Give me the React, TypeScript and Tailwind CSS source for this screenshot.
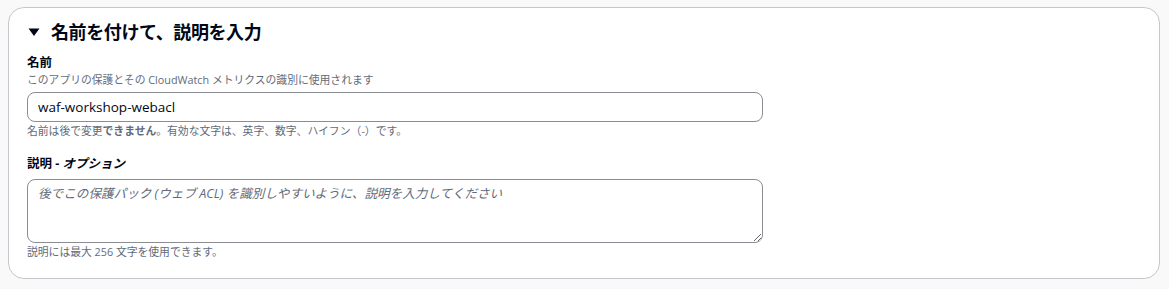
import React from "react";

const font = '"Open Sans", "Noto Sans", "Noto Sans CJK JP", sans-serif';

export default function App() {
  return (
    <div className="min-h-[289px] w-[1169px] bg-[#f9f9f9] pt-[7px] pl-[8px] pr-[9px]" style={{ fontFamily: font }}>
      <div className="h-[272px] rounded-[16px] border border-[#c6c6cd] bg-white pl-[18px] pr-[18px] pt-[13px]">
        <div className="flex items-center gap-[11px] h-[22px]">
          <svg width="12" height="10" viewBox="0 0 12 10" className="ml-[1px]">
            <polygon points="0.5,1.5 11.5,1.5 6,9" fill="#000716" />
          </svg>
          <h2 className="text-[18px] leading-[22px] font-bold tracking-[-0.4px] text-[#000716]">名前を付けて、説明を入力</h2>
        </div>

        <div className="mt-[11px]">
          <div className="text-[12.5px] leading-[18px] font-bold text-[#000716]">名前</div>
          <div className="text-[10.8px] leading-[16px] text-[#5f6b7a]">このアプリの保護とその CloudWatch メトリクスの識別に使用されます</div>
          <input
            readOnly
            value="waf-workshop-webacl"
            className="mt-[4px] block w-[736px] h-[30px] rounded-[8px] border border-[#8c8c94] px-[10px] text-[13.5px] text-[#000716] outline-none"
            style={{ fontFamily: font }}
          />
          <div className="mt-[1px] text-[10.8px] leading-[16px] text-[#5f6b7a]">
            名前は後で変更<span className="font-bold">できません</span>。有効な文字は、英字、数字、ハイフン（-）です。
          </div>
        </div>

        <div className="mt-[15px]">
          <div className="text-[12.5px] leading-[20px] font-bold text-[#000716]">
            説明 - <span className="italic">オプション</span>
          </div>
          <textarea
            placeholder="後でこの保護パック (ウェブ ACL) を識別しやすいように、説明を入力してください"
            className="mt-[5px] block w-[736px] h-[64px] rounded-[8px] border border-[#8c8c94] px-[10px] py-[4px] text-[12.6px] leading-[20px] text-[#000716] outline-none placeholder:italic placeholder:text-[#5f6b7a]"
            style={{ fontFamily: font }}
          />
          <div className="mt-[1px] text-[10.8px] leading-[16px] text-[#5f6b7a]">説明には最大 256 文字を使用できます。</div>
        </div>
      </div>
    </div>
  );
}
